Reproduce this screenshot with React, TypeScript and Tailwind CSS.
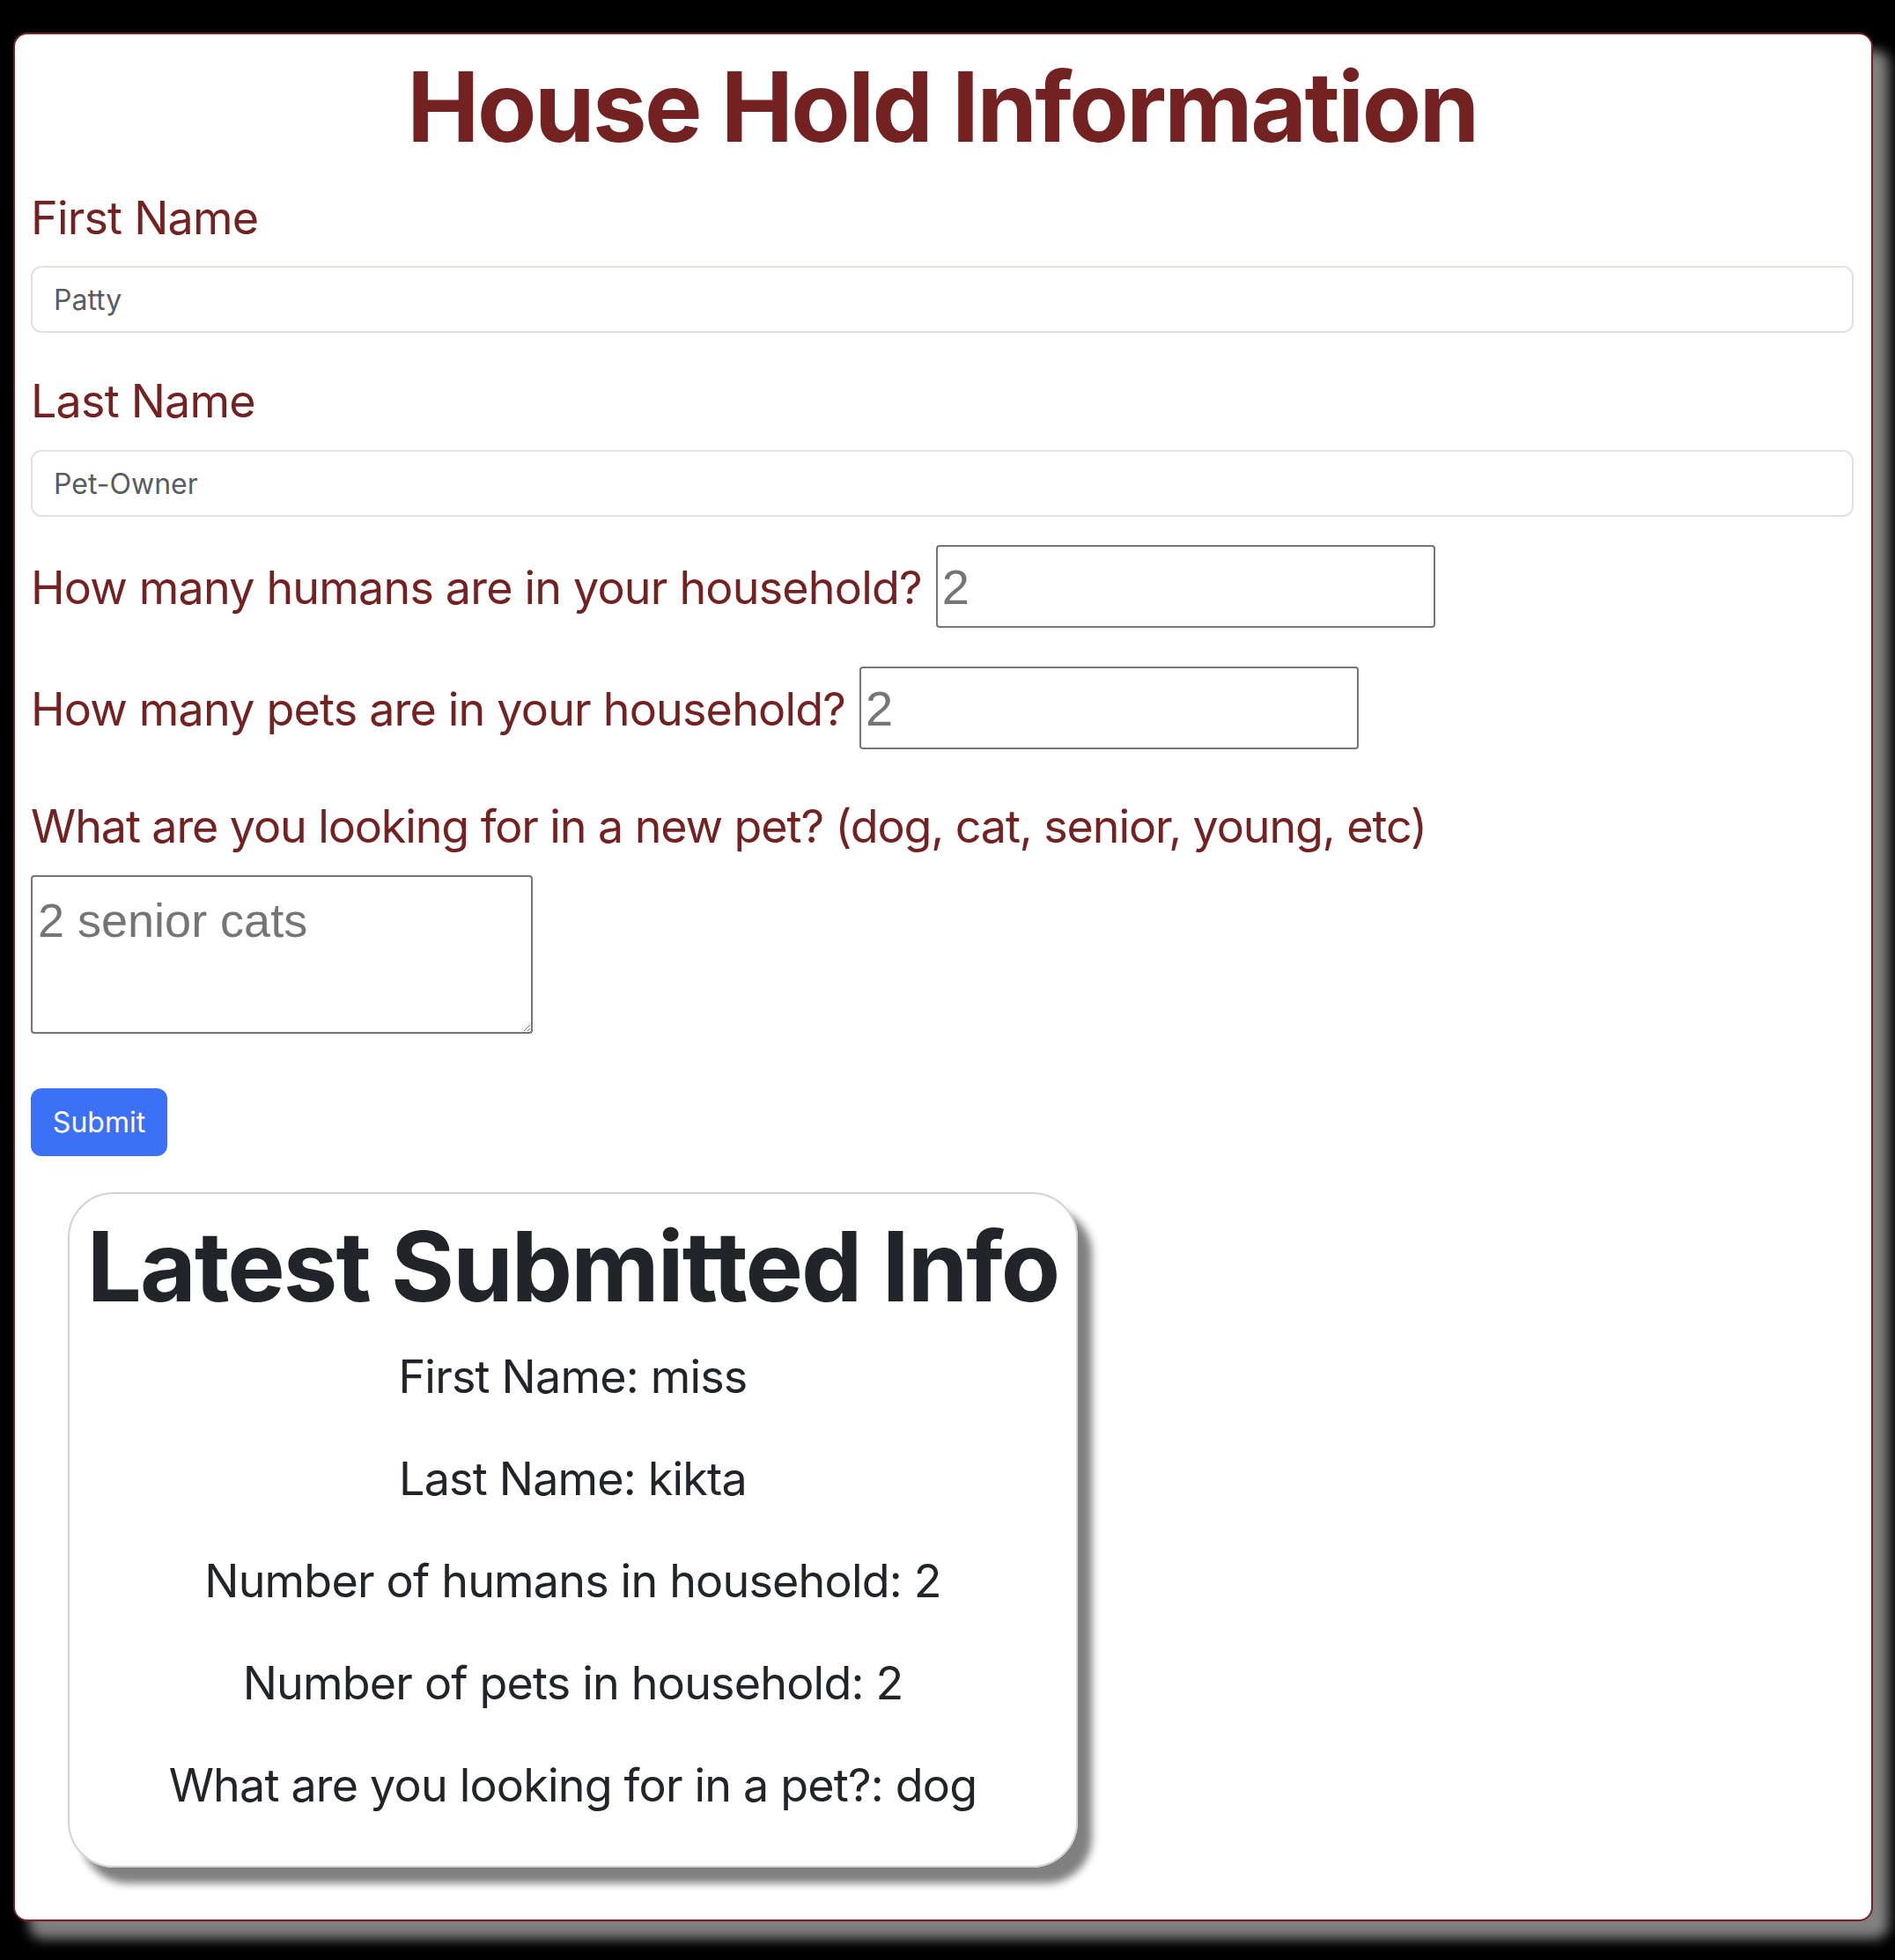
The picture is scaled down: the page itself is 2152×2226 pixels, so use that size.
export default function App() {
  const info = [
    "First Name: miss",
    "Last Name: kikta",
    "Number of humans in household: 2",
    "Number of pets in household: 2",
    "What are you looking for in a pet?: dog",
  ];

  return (
    <div className="min-h-screen bg-black pt-[37px] pl-[15px] pb-[44px] font-['Inter',sans-serif]">
      <div className="w-[2112px] rounded-[16px] border-2 border-[#732121] bg-white pl-[18px] pr-[20px] pt-[16px] pb-[59px] shadow-[18px_20px_14px_#808080]">
        <h1 className="whitespace-nowrap text-center text-[110px] font-bold leading-[1.2] tracking-[-2.5px] text-[#732121]">
          House Hold Information
        </h1>

        <form className="flex flex-col" onSubmit={(e) => e.preventDefault()}>
          <label className="mt-[30px] text-[52px] leading-[62px] tracking-[-0.8px] text-[#732121]">First Name</label>
          <input
            type="text"
            placeholder="Patty"
            className="mt-[23px] h-[76px] w-full rounded-[12px] border-2 border-[#dee2e6] px-[24px] text-[32px] outline-none placeholder:text-[#595c5f]"
          />

          <label className="mt-[47px] text-[52px] leading-[62px] tracking-[-0.8px] text-[#732121]">Last Name</label>
          <input
            type="text"
            placeholder="Pet-Owner"
            className="mt-[24px] h-[76px] w-full rounded-[12px] border-2 border-[#dee2e6] px-[24px] text-[32px] outline-none placeholder:text-[#595c5f]"
          />

          <div className="mt-[32px] flex items-baseline gap-[16px]">
            <label className="text-[52px] leading-[62px] tracking-[-0.8px] text-[#732121]">
              How many humans are in your household?
            </label>
            <input
              type="text"
              placeholder="2"
              className="h-[94px] w-[567px] rounded-[4px] border-2 border-[#767676] px-[5px] font-['Liberation_Sans',sans-serif] text-[56px] outline-none placeholder:text-[#757575]"
            />
          </div>

          <div className="mt-[44px] flex items-baseline gap-[16px]">
            <label className="text-[52px] leading-[62px] tracking-[-0.8px] text-[#732121]">
              How many pets are in your household?
            </label>
            <input
              type="text"
              placeholder="2"
              className="h-[94px] w-[567px] rounded-[4px] border-2 border-[#767676] px-[5px] font-['Liberation_Sans',sans-serif] text-[56px] outline-none placeholder:text-[#757575]"
            />
          </div>

          <label className="mt-[57px] text-[52px] leading-[62px] tracking-[-1.1px] text-[#732121]">
            What are you looking for in a new pet? (dog, cat, senior, young, etc)
          </label>
          <textarea
            placeholder="2 senior cats"
            className="mt-[24px] h-[180px] w-[570px] rounded-[4px] border-2 border-[#767676] px-[6px] pt-[8px] font-['Liberation_Sans',sans-serif] text-[54px] leading-[82px] outline-none placeholder:text-[#757575]"
          />

          <button
            type="submit"
            className="mt-[62px] h-[77px] w-[155px] rounded-[12px] bg-[#3b71f6] text-[32px] text-white"
          >
            Submit
          </button>
        </form>

        <div className="ml-[42px] mt-[41px] w-[1147px] rounded-[52px] border-2 border-[#d3d3d3] pt-[16px] pb-[60px] text-center text-[#212529] shadow-[16px_18px_10px_#808080]">
          <h2 className="whitespace-nowrap text-[110px] font-bold leading-[1.2] tracking-[-1.9px]">
            Latest Submitted Info
          </h2>
          <div className="mt-[29px] flex flex-col gap-[54px]">
            {info.map((line) => (
              <p key={line} className="text-[52px] leading-[62px] tracking-[-0.8px]">
                {line}
              </p>
            ))}
          </div>
        </div>
      </div>
    </div>
  );
}
